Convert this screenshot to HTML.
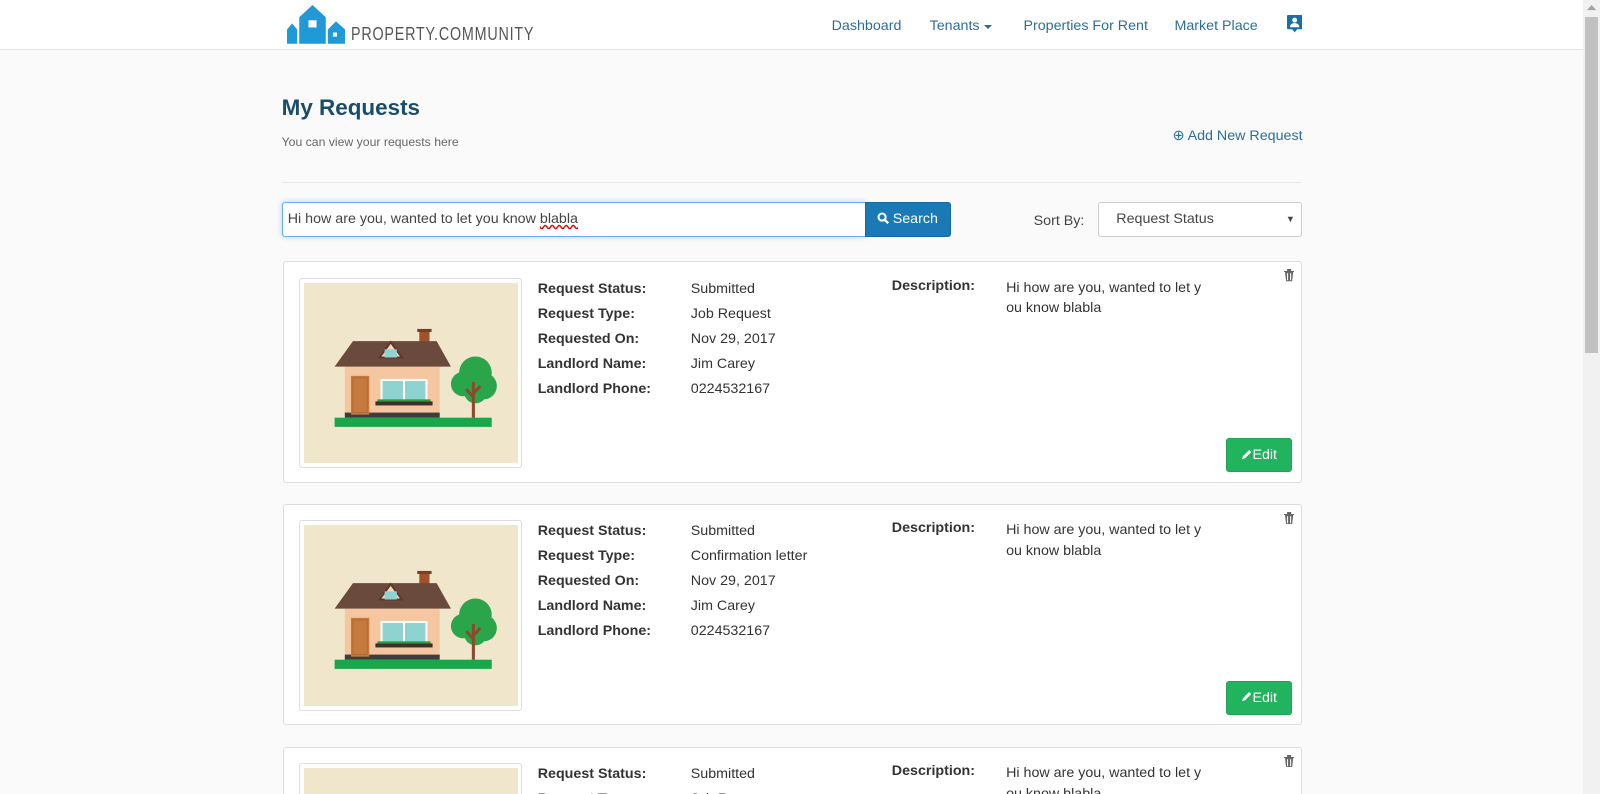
<!DOCTYPE html>
<html><head><meta charset="utf-8">
<style>
*{box-sizing:border-box;margin:0;padding:0}
html,body{width:1600px;height:794px;overflow:hidden;background:#fafafa}
body{font-family:"Liberation Sans",Arial,sans-serif;color:#333}
#z{zoom:1.0204;width:1568px;height:778px;position:relative;background:#fafafa;overflow:hidden}
.abs{position:absolute}
.nav{left:0;top:0;width:1551px;height:49px;background:#fff;border-bottom:1px solid #e5e5e5}
.nl{font-size:14px;color:#2a6f97;top:18px}
.sb{left:1551px;top:0;width:17px;height:778px;background:#f1f1f1}
.thumb{left:1553px;top:17px;width:13px;height:329px;background:#c1c1c1}
h1{font-size:22px;color:#1a4c6c;font-weight:bold}
.card{left:277px;width:999px;height:217px;background:#fff;border:1px solid #ddd;border-radius:3px}
.img{left:15px;top:15px;width:219px;height:187px;border:1px solid #ddd;border-radius:3px;padding:4px;background:#fff}
.img svg{display:block;width:210px;height:177px;background:#f0e6cc}
.lab{font-size:14px;font-weight:bold;color:#333;line-height:24.5px;left:249px;top:14px}
.val{font-size:14px;color:#333;line-height:24.5px;left:399px;top:14px}
.dl{font-size:14px;font-weight:bold;left:596px;top:15px}
.dv{font-size:14px;left:708px;top:15px;width:192px;line-height:20px;word-break:break-all}
.edit{left:924px;top:172px;width:64px;height:34px;background:#22b35e;border:1px solid #1ea453;border-radius:3px;color:#fff;font-size:14px;line-height:32px;text-align:center}
.trash{left:980px;top:7px}
</style></head><body><div id="z">
<div class="abs nav"></div>
<svg class="abs" style="left:281px;top:5px" width="57" height="38" viewBox="0 0 57 38">
<path fill="#1f9ad6" d="M0 38V24l5-6 5 6v14zM12 38V12L25 0l13 12v26zM40 38V24l8-8 9 8v14z"/>
<rect x="21" y="15" width="8" height="7" fill="#fff"/><rect x="45" y="27" width="4" height="4" fill="#fff"/>
</svg>
<div class="abs" style="left:344px;top:23px;font-size:18px;color:#555;letter-spacing:1px;transform:scaleX(0.78);transform-origin:0 0;white-space:nowrap">PROPERTY.COMMUNITY</div>
<div class="abs nl" style="left:815px">Dashboard</div>
<div class="abs nl" style="left:911px">Tenants <span style="display:inline-block;border-left:4px solid transparent;border-right:4px solid transparent;border-top:4px solid #2a6f97;vertical-align:middle"></span></div>
<div class="abs nl" style="left:1003px">Properties For Rent</div>
<div class="abs nl" style="left:1151px">Market Place</div>
<svg class="abs" style="left:1261px;top:15px" width="15" height="18" viewBox="0 0 15 18"><path fill="#1a6fa3" d="M1 0h13a1 1 0 0 1 1 1v12a1 1 0 0 1-1 1H10l-2.5 3L5 14H1a1 1 0 0 1-1-1V1a1 1 0 0 1 1-1z"/><circle cx="7.5" cy="5" r="2.4" fill="#fff"/><path fill="#fff" d="M3 12c0-3 2-4 4.5-4S12 9 12 12z"/></svg>
<div class="abs sb"></div><div class="abs thumb"></div>
<svg class="abs" style="left:1555px;top:5px" width="9" height="6"><path d="M0 5L4.5 0 9 5z" fill="#a3a3a3"/></svg>

<h1 class="abs" style="left:276px;top:93px">My Requests</h1>
<div class="abs" style="left:276px;top:132px;font-size:12px;color:#666">You can view your requests here</div>
<div class="abs" style="left:1149px;top:125px;font-size:14px;color:#2a6f97">⊕ Add New Request</div>
<div class="abs" style="left:276px;top:178px;width:999px;height:1px;background:#e8e8e8"></div>
<div class="abs" style="left:276px;top:198px;width:573px;height:34px;background:#fff;border:1px solid #66afe9;border-radius:3px 0 0 3px;box-shadow:0 0 5px rgba(102,175,233,.5);font-size:14px;line-height:32px;padding-left:5px;color:#444">Hi how are you, wanted to let you know <span style="text-decoration:underline wavy #d00">blabla</span></div>
<div class="abs" style="left:848px;top:198px;width:84px;height:34px;background:#1a7ab6;border:1px solid #16699c;border-radius:0 3px 3px 0;color:#fff;font-size:14px;line-height:32px;padding-left:10px"><svg width="12" height="12" viewBox="0 0 12 12" style="vertical-align:-1px"><circle cx="5" cy="5" r="3.5" fill="none" stroke="#fff" stroke-width="2"/><path d="M7.5 7.5L11 11" stroke="#fff" stroke-width="2.3"/></svg> Search</div>
<div class="abs" style="left:1013px;top:209px;font-size:14px;color:#444">Sort By:</div>
<div class="abs" style="left:1076px;top:198px;width:200px;height:34px;background:#fff;border:1px solid #ccc;border-radius:3px;font-size:14px;line-height:32px;padding-left:17px;color:#444">Request Status<span style="position:absolute;right:6px;font-size:9px">▼</span></div>

<svg width="0" height="0" style="position:absolute"><defs><g id="h">
<rect x="30" y="132" width="154" height="9" fill="#1aa64a"/>
<rect x="40" y="82" width="93" height="48" fill="#f5c7a0"/>
<rect x="40" y="127" width="93" height="5" fill="#3d3d3d"/>
<rect x="113" y="46" width="10" height="12" fill="#a0522d"/><rect x="111" y="45" width="14" height="3" fill="#7a3f22"/>
<polygon points="30,82 48,57 130,57 144,82" fill="#6b4a3e"/>
<polygon points="74,73 85,58 96,73" fill="#f5d6b8" stroke="#5a3a30" stroke-width="2"/>
<rect x="79" y="65" width="12" height="8" fill="#8fd3d0"/>
<rect x="46" y="91" width="18" height="38" fill="#c77a3f"/><rect x="48" y="93" width="14" height="34" fill="none" stroke="#b06a32"/>
<rect x="75" y="94" width="46" height="22" fill="#fff"/><rect x="77" y="96" width="20" height="19" fill="#8fd3d0"/><rect x="99" y="96" width="20" height="19" fill="#8fd3d0"/>
<rect x="72" y="114" width="52" height="2" fill="#2e9c3e"/><rect x="70" y="116" width="56" height="4" fill="#3d2f2a"/>
<circle cx="168" cy="88" r="16" fill="#2aa54a"/><circle cx="156" cy="99" r="12" fill="#2aa54a"/><circle cx="176" cy="101" r="13" fill="#2aa54a"/><circle cx="168" cy="107" r="11" fill="#2aa54a"/>
<path d="M166 132V97M166 112l-7-8M166 108l7-7" stroke="#8b4a2b" stroke-width="3" fill="none"/>
</g>
<g id="p"><path d="M1 11l1-3 6-6 2 2-6 6z" fill="#fff"/></g></defs></svg>

<div class="abs card" style="top:256px">
<div class="abs img"><svg viewBox="0 0 210 177"><use href="#h"/></svg></div>
<div class="abs lab">Request Status:<br>Request Type:<br>Requested On:<br>Landlord Name:<br>Landlord Phone:</div>
<div class="abs val">Submitted<br>Job Request<br>Nov 29, 2017<br>Jim Carey<br>0224532167</div>
<div class="abs dl">Description:</div>
<div class="abs dv">Hi how are you, wanted to let y ou know blabla</div>
<svg class="abs trash" width="10" height="12" viewBox="0 0 10 12"><path fill="#666" d="M0 2h10v1H0zM3 0h4v2H3zM1 3h8l-1 9H2zM3 4v7h1V4zm3 0v7h1V4z"/></svg>
<div class="abs edit"><svg width="11" height="12" viewBox="0 0 11 12" style="vertical-align:-1px"><use href="#p"/></svg>Edit</div>
</div>
<div class="abs card" style="top:494px">
<div class="abs img"><svg viewBox="0 0 210 177"><use href="#h"/></svg></div>
<div class="abs lab">Request Status:<br>Request Type:<br>Requested On:<br>Landlord Name:<br>Landlord Phone:</div>
<div class="abs val">Submitted<br>Confirmation letter<br>Nov 29, 2017<br>Jim Carey<br>0224532167</div>
<div class="abs dl">Description:</div>
<div class="abs dv">Hi how are you, wanted to let y ou know blabla</div>
<svg class="abs trash" width="10" height="12" viewBox="0 0 10 12"><path fill="#666" d="M0 2h10v1H0zM3 0h4v2H3zM1 3h8l-1 9H2zM3 4v7h1V4zm3 0v7h1V4z"/></svg>
<div class="abs edit"><svg width="11" height="12" viewBox="0 0 11 12" style="vertical-align:-1px"><use href="#p"/></svg>Edit</div>
</div>
<div class="abs card" style="top:732px">
<div class="abs img"><svg viewBox="0 0 210 177"><use href="#h"/></svg></div>
<div class="abs lab">Request Status:<br>Request Type:<br>Requested On:<br>Landlord Name:<br>Landlord Phone:</div>
<div class="abs val">Submitted<br>Job Request<br>Nov 29, 2017<br>Jim Carey<br>0224532167</div>
<div class="abs dl">Description:</div>
<div class="abs dv">Hi how are you, wanted to let y ou know blabla</div>
<svg class="abs trash" width="10" height="12" viewBox="0 0 10 12"><path fill="#666" d="M0 2h10v1H0zM3 0h4v2H3zM1 3h8l-1 9H2zM3 4v7h1V4zm3 0v7h1V4z"/></svg>
</div>
</div></body></html>
